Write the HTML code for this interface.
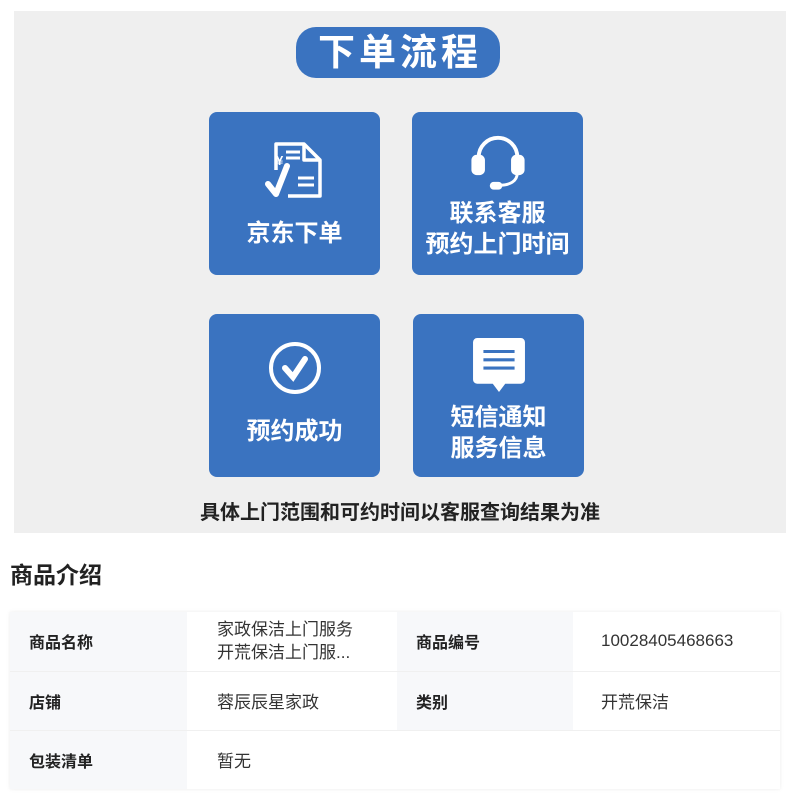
<!DOCTYPE html>
<html><head><meta charset="utf-8"><style>
*{margin:0;padding:0;box-sizing:border-box}
body{width:800px;height:800px;background:#fff;font-family:"Liberation Sans","Noto Sans CJK SC",sans-serif;position:relative;overflow:hidden}
.panel{position:absolute;left:14px;top:11px;width:772px;height:522px;background:#efefef}
.pill{position:absolute;left:296px;top:27px;width:204px;height:51px;border-radius:20px;background:#3a73c0;color:#fff;font-size:37px;font-weight:bold;text-align:center;line-height:51px;letter-spacing:4px;padding-left:4px}
.box{position:absolute;width:171px;height:163px;border-radius:8px;background:#3a73c0;color:#fff;font-size:24px;font-weight:bold;text-align:center;line-height:31px}
.box svg{position:absolute;left:50%;transform:translateX(-50%)}
.box .t{position:absolute;left:0;right:0}
.note{position:absolute;left:0;width:800px;top:496px;text-align:center;font-size:20px;font-weight:bold;color:#222}
h2{position:absolute;left:10px;top:556px;font-size:23px;font-weight:bold;color:#222}
table{position:absolute;left:10px;top:612px;width:770px;border-collapse:collapse;box-shadow:0 0 4px rgba(0,0,0,.08);font-size:17px;color:#333}
td{height:59px;border-bottom:1px solid #f0f0f0;vertical-align:middle}
td.l{background:#f7f8fa;font-weight:bold;color:#222;padding-left:19px;font-size:16px}
td.v{padding-left:30px}
</style></head><body>
<div class="panel"></div>
<div class="pill">下单流程</div>
<div class="box" style="left:209px;top:112px">
<svg width="62" height="62" viewBox="0 0 62 62" style="top:28px" fill="none" stroke="#fff" stroke-width="3.5" stroke-linejoin="round"><path d="M12 30V4h28l16 16v36H24"/><path d="M40 4v16h16"/><path d="M22 12h14M22 18h14M34 38h16M34 45h16" stroke-width="3"/><text x="12" y="25" fill="#fff" stroke="none" font-size="13" font-weight="bold">¥</text><path d="M4 44l8 10 11-28" stroke-width="6" stroke-linecap="round"/></svg>
<div class="t" style="top:106px">京东下单</div></div>
<div class="box" style="left:412px;top:112px">
<svg width="62" height="58" viewBox="0 0 64 60" style="top:22px" fill="none" stroke="#fff"><path d="M12 30V24a20 20 0 0 1 40 0v6" stroke-width="4"/><rect x="5" y="22" width="13" height="20" rx="5" fill="#fff"/><rect x="46" y="22" width="13" height="20" rx="5" fill="#fff"/><path d="M52 40c0 9-8 13-18 13" stroke-width="3"/><rect x="24" y="50" width="12" height="7" rx="3.5" fill="#fff"/></svg>
<div class="t" style="top:86px">联系客服<br>预约上门时间</div></div>
<div class="box" style="left:209px;top:314px">
<svg width="56" height="56" viewBox="0 0 56 56" style="top:26px" fill="none" stroke="#fff"><circle cx="28" cy="28" r="24" stroke-width="4"/><path d="M18 28l8 9 12-18" stroke-width="6" stroke-linecap="round"/></svg>
<div class="t" style="top:102px">预约成功</div></div>
<div class="box" style="left:413px;top:314px">
<svg width="54" height="54" viewBox="0 0 50 52" style="top:24px"><path d="M4 0h42a4 4 0 0 1 4 4v36a4 4 0 0 1-4 4H31l-6 8-6-8H4a4 4 0 0 1-4-4V4a4 4 0 0 1 4-4z" fill="#fff"/><path d="M10 13h30M10 21h30M10 29h30" stroke="#3a73c0" stroke-width="3"/></svg>
<div class="t" style="top:88px">短信通知<br>服务信息</div></div>
<div class="note">具体上门范围和可约时间以客服查询结果为准</div>
<h2>商品介绍</h2>
<table>
<tr><td class="l" style="width:177px">商品名称</td><td class="v" style="width:210px;line-height:23px">家政保洁上门服务<br>开荒保洁上门服...</td><td class="l" style="width:176px">商品编号</td><td class="v" style="padding-left:28px">10028405468663</td></tr>
<tr><td class="l">店铺</td><td class="v">蓉辰辰星家政</td><td class="l">类别</td><td class="v" style="padding-left:28px">开荒保洁</td></tr>
<tr><td class="l" style="border-bottom:none">包装清单</td><td class="v" colspan="3" style="border-bottom:none">暂无</td></tr>
</table>
</body></html>
